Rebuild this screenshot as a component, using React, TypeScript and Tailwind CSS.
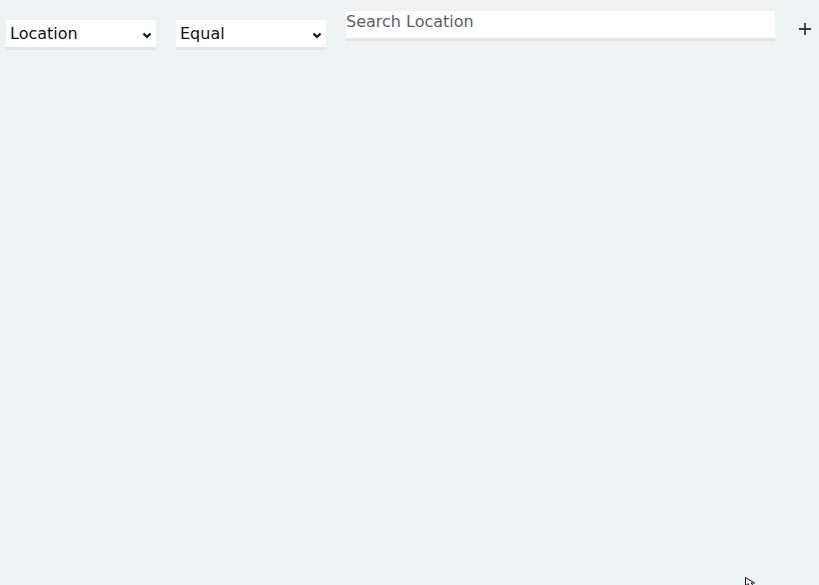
import React, { useState } from "react";

const Chevron: React.FC = () => (
    <svg
        width="10"
        height="7"
        viewBox="0 0 10 7"
        className="pointer-events-none absolute right-[4px] top-[12px]"
    >
        <path d="M1.5 1.5 L5 5 L8.5 1.5" fill="none" stroke="#111" strokeWidth="2.2" />
    </svg>
);

interface SelectProps {
    value: string;
    options: string[];
    onChange: (v: string) => void;
}

const FilterSelect: React.FC<SelectProps> = ({ value, options, onChange }) => (
    <div className="relative mt-[20px] w-[150px] shrink-0">
        <select
            value={value}
            onChange={(e) => onChange(e.target.value)}
            className="block h-[30px] w-full appearance-none rounded-none border-0 border-b-[3px] border-[#e4e5e6] bg-white pl-[4px] pr-5 text-[16px] text-[#111] outline-none"
            style={{ fontFamily: "'DejaVu Sans', sans-serif" }}
        >
            {options.map((o) => (
                <option key={o}>{o}</option>
            ))}
        </select>
        <Chevron />
    </div>
);

const App: React.FC = () => {
    const [field, setField] = useState("Location");
    const [op, setOp] = useState("Equal");
    const [query, setQuery] = useState("");

    return (
        <div
            className="relative h-[585px] w-full overflow-hidden bg-[#eff2f3]"
            style={{ fontFamily: "'DejaVu Sans', sans-serif" }}
        >
            <div className="flex items-start pl-[6px]">
                <FilterSelect
                    value={field}
                    options={["Location", "Name", "Type"]}
                    onChange={setField}
                />
                <div className="ml-[20px]">
                    <FilterSelect
                        value={op}
                        options={["Equal", "Not Equal", "Contains"]}
                        onChange={setOp}
                    />
                </div>
                <input
                    value={query}
                    onChange={(e) => setQuery(e.target.value)}
                    placeholder="Search Location"
                    className="ml-[20px] mt-[11px] box-border h-[30px] w-[429px] shrink-0 border-0 border-b-[3px] border-[#e4e5e6] bg-white p-0 pb-[7px] text-[16px] text-[#111] outline-none placeholder:text-[#5b606b]"
                />
                <button className="ml-[23px] mt-[22px] text-[#333a4b]">
                    <svg width="14" height="14" viewBox="0 0 14 14">
                        <path d="M7 1 V13 M1 7 H13" stroke="currentColor" strokeWidth="1.8" />
                    </svg>
                </button>
            </div>

            {/* mouse pointer */}
            <svg
                width="10"
                height="10"
                viewBox="0 0 10 10"
                className="absolute left-[745px] top-[577px]"
            >
                <path d="M0.5 0.5 V9 L3 6.5 L5 9.5 L9 9.5 L6 6 H9.5 Z" fill="#fff" stroke="#111" strokeWidth="1" />
            </svg>
        </div>
    );
};

export default App;
